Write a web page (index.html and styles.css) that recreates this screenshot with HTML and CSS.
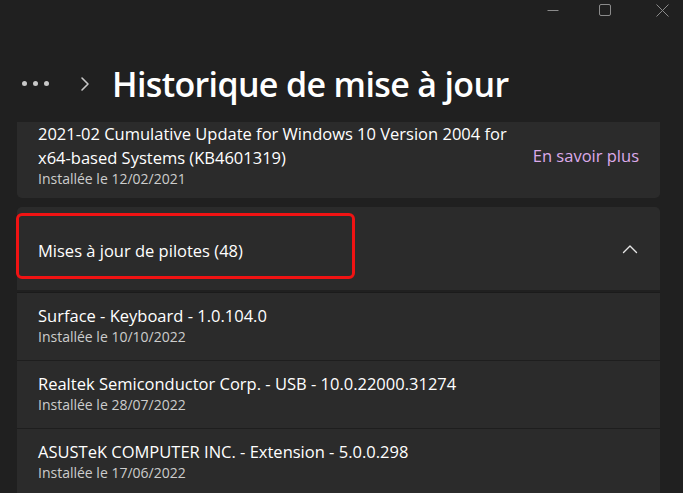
FILE: index.html
```html
<!DOCTYPE html>
<html lang="fr">
<head>
<meta charset="utf-8">
<title>Historique de mise à jour</title>
<link rel="stylesheet" href="styles.css">
</head>
<body>
<div class="window">
  <div class="titlebar">
    <span class="ctl ctl-min"><svg width="12" height="12" viewBox="0 0 12 12"><path d="M0.5 6.5h11" stroke="#8b8b8b" stroke-width="1"/></svg></span>
    <span class="ctl ctl-max"><svg width="12" height="12" viewBox="0 0 12 12"><rect x="0.5" y="0.5" width="11" height="11" rx="1.5" fill="none" stroke="#8b8b8b" stroke-width="1"/></svg></span>
    <span class="ctl ctl-close"><svg width="13" height="13" viewBox="0 0 13 13"><path d="M0.5 0.5l12 12M12.5 0.5l-12 12" stroke="#8b8b8b" stroke-width="1"/></svg></span>
  </div>
  <header class="header">
    <span class="dots"><i></i><i></i><i></i></span>
    <svg class="crumb-chevron" width="10" height="16" viewBox="0 0 10 16"><path d="M2 2l6 6-6 6" fill="none" stroke="#c8c8c8" stroke-width="1.6" stroke-linecap="round" stroke-linejoin="round"/></svg>
    <h1 class="title">Historique de mise à jour</h1>
  </header>
  <main class="scroll">
    <section class="card card-update">
      <div class="update-text">
        <div class="primary">2021-02 Cumulative Update for Windows 10 Version 2004 for<br>x64-based Systems (KB4601319)</div>
        <div class="secondary">Installée le 12/02/2021</div>
      </div>
      <a class="link">En savoir plus</a>
    </section>
    <section class="expander">
      <div class="expander-head">
        <span class="primary">Mises à jour de pilotes (48)</span>
        <svg class="chev-up" width="16" height="10" viewBox="0 0 16 10"><path d="M1.5 8.5l6.5-6.5 6.5 6.5" fill="none" stroke="#e6e6e6" stroke-width="1.4" stroke-linecap="round" stroke-linejoin="round"/></svg>
        <div class="highlight"></div>
      </div>
      <div class="rows">
        <div class="row">
          <div class="primary">Surface - Keyboard - 1.0.104.0</div>
          <div class="secondary">Installée le 10/10/2022</div>
        </div>
        <div class="row">
          <div class="primary">Realtek Semiconductor Corp. - USB - 10.0.22000.31274</div>
          <div class="secondary">Installée le 28/07/2022</div>
        </div>
        <div class="row">
          <div class="primary">ASUSTeK COMPUTER INC. - Extension - 5.0.0.298</div>
          <div class="secondary">Installée le 17/06/2022</div>
        </div>
      </div>
    </section>
  </main>
</div>
</body>
</html>
```

FILE: styles.css
```css
* { box-sizing: border-box; }
html, body { margin: 0; padding: 0; }
body {
  background: #202020;
  font-family: "Open Sans", "Noto Sans", sans-serif;
  color: #ffffff;
  width: 683px;
  height: 493px;
  overflow: hidden;
}
.window { width: 683px; height: 493px; display: flex; flex-direction: column; }

.titlebar {
  height: 32px;
  flex-shrink: 0;
  display: flex;
  justify-content: flex-end;
  align-items: flex-start;
  padding-right: 14px;
  padding-top: 4px;
}
.ctl { display: flex; }
.ctl svg { display: block; }
.ctl-max { margin-left: 40px; }
.ctl-close { margin-left: 45px; }

.header {
  height: 90px;
  flex-shrink: 0;
  display: flex;
  align-items: center;
  padding: 14px 0 0 22px;
}
.dots { display: flex; gap: 6px; margin-top: -2px; }
.dots i { width: 5px; height: 5px; border-radius: 50%; background: #c8c8c8; display: block; }
.crumb-chevron { margin-left: 31px; display: block; }
.title {
  margin: 0 0 0 22px;
  font-size: 34px;
  font-weight: 600;
  letter-spacing: -0.65px;
  line-height: 44px;
  color: #ffffff;
}

.scroll {
  flex: 1;
  overflow: hidden;
  padding: 0 23px 0 17px;
  display: flex;
  flex-direction: column;
  gap: 9px;
}
.card {
  flex-shrink: 0;
  background: #2b2b2b;
  border-radius: 0 0 5px 5px;
}
.card-update {
  height: 76px;
  display: flex;
  align-items: flex-start;
  justify-content: space-between;
  padding: 0 21px 0 21px;
}
.update-text .primary { line-height: 24px; }
.primary { font-size: 16.5px; line-height: 22px; color: #ffffff; }
.secondary { font-size: 14px; line-height: 20px; color: #cdcdcd; }
.update-text .secondary { line-height: 18px; }
.link { color: #dcaaea; font-size: 16.5px; line-height: 22px; margin-top: 23px; }

.expander { display: flex; flex-direction: column; flex-shrink: 0; }
.expander-head {
  position: relative;
  height: 83px;
  background: #2b2b2b;
  border-radius: 5px 5px 0 0;
  display: flex;
  align-items: center;
  justify-content: space-between;
  padding: 4px 22px 0 21px;
}
.chev-up { display: block; margin-top: -4px; }
.highlight {
  position: absolute;
  left: -1px;
  top: 6px;
  width: 339px;
  height: 66px;
  border: 3px solid #f01313;
  border-radius: 6px;
}
.rows {
  margin-top: 2px;
  border-top: 1px solid #1b1b1b;
  background: #2b2b2b;
}
.row {
  height: 68px;
  padding: 12px 21px 0 21px;
  border-bottom: 1px solid #1e1e1e;
}
.row .primary { line-height: 22px; }
```
